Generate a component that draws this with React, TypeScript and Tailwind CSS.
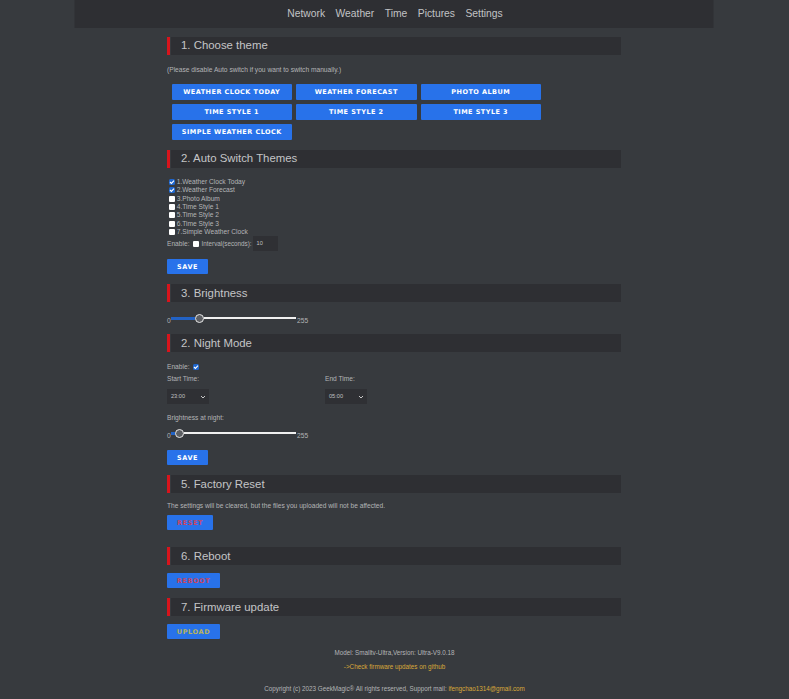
import React from 'react';

const navItems = ['Network', 'Weather', 'Time', 'Pictures', 'Settings'];
const themes = [
  'WEATHER CLOCK TODAY',
  'WEATHER FORECAST',
  'PHOTO ALBUM',
  'TIME STYLE 1',
  'TIME STYLE 2',
  'TIME STYLE 3',
  'SIMPLE WEATHER CLOCK',
];
const autoThemes = [
  { label: '1.Weather Clock Today', checked: true },
  { label: '2.Weather Forecast', checked: true },
  { label: '3.Photo Album', checked: false },
  { label: '4.Time Style 1', checked: false },
  { label: '5.Time Style 2', checked: false },
  { label: '6.Time Style 3', checked: false },
  { label: '7.Simple Weather Clock', checked: false },
];

const Heading = ({ title, className }: { title: string; className: string }) => (
  <div className={`flex h-[18px] gap-[1.5px] ${className}`}>
    <div className="w-[2.5px] bg-[#d8141c]" />
    <div className="flex flex-1 items-center bg-[#2e2f33] pl-[10px] text-[11.4px] text-[#c4c5c7]">{title}</div>
  </div>
);

const Check = ({ checked }: { checked: boolean }) =>
  checked ? (
    <span className="flex h-[6px] w-[6px] shrink-0 items-center justify-center rounded-[1.5px] bg-[#1f66cc]">
      <svg width="6" height="6" viewBox="0 0 6 6" fill="none" stroke="#ffffff" strokeWidth="1.1">
        <path d="M1 3l1.4 1.4L5 1.7" />
      </svg>
    </span>
  ) : (
    <span className="h-[6px] w-[6px] shrink-0 rounded-[1px] bg-white" />
  );

const ActionButton = ({ label, color, width }: { label: string; color: string; width: string }) => (
  <button className={`flex h-[15px] items-center justify-center rounded-[1px] bg-[#2872ea] pt-[2px] font-['DejaVu_Sans',sans-serif] text-[6.5px] font-bold tracking-[0.6px] ${width} ${color}`}>
    {label}
  </button>
);

const Slider = ({ fill, className }: { fill: string; className: string }) => (
  <div className={`flex h-[10px] items-center text-[6.65px] text-[#b4b5b7] ${className}`}>
    <span className="w-[4px] translate-y-[3px]">0</span>
    <div className="flex w-[125px] items-center">
      <div className={`h-[3px] bg-[#2262c4] ${fill}`} />
      <div className="h-[9px] w-[9px] shrink-0 rounded-full border border-[#e8e8e8] bg-[#5c5e62]" />
      <div className="h-[2px] flex-1 bg-[#f0f0f0]" />
    </div>
    <span className="ml-[1px] translate-y-[3px]">255</span>
  </div>
);

const TimeSelect = ({ value }: { value: string }) => (
  <div className="flex h-[15px] w-[42px] items-center justify-between bg-[#2f3034] pl-[4px] pr-[3px] text-[5.6px] text-[#c0c1c3]">
    {value}
    <svg width="6" height="6" viewBox="0 0 6 6" fill="none" stroke="#c8c8c8" strokeWidth="1">
      <path d="M1 2l2 2 2-2" />
    </svg>
  </div>
);

export default function App() {
  return (
    <div className="min-h-[699px] bg-[#373a3e] font-['Liberation_Sans',Arial,sans-serif]">
      <nav className="mx-auto flex h-[28px] w-[639px] -translate-x-[0.5px] items-center justify-center gap-[10.5px] bg-[#2e2f33] pl-[2px] text-[10.3px] text-[#c2c3c5]">
        {navItems.map((item) => (
          <span key={item}>{item}</span>
        ))}
      </nav>

      <main className="ml-[167px] w-[454px]">
        <Heading title="1. Choose theme" className="mt-[9px]" />
        <p className="mt-[10px] h-[9px] text-[6.65px] leading-[9px] text-[#b4b5b7]">
          (Please disable Auto switch if you want to switch manually.)
        </p>
        <div className="ml-[4.5px] mt-[10px] grid w-[370px] grid-cols-[120.5px_120.5px_120.5px] gap-x-[4px] gap-y-[4.5px]">
          {themes.map((theme) => (
            <button
              key={theme}
              className="flex h-[15.5px] items-center justify-center rounded-[1px] bg-[#2872ea] pt-[2px] font-['DejaVu_Sans',sans-serif] text-[6.5px] font-bold tracking-[0.45px] text-white"
            >
              {theme}
            </button>
          ))}
        </div>

        <Heading title="2. Auto Switch Themes" className="mt-[10px]" />
        <div className="ml-[2px] mt-[10.5px] flex flex-col text-[6.65px] text-[#b4b5b7]">
          {autoThemes.map((theme) => (
            <label key={theme.label} className="flex h-[8.3px] items-center gap-[1.7px]">
              <Check checked={theme.checked} />
              {theme.label}
            </label>
          ))}
        </div>
        <div className="flex h-[15px] items-center text-[6.65px] text-[#b4b5b7]">
          <span>Enable:</span>
          <span className="ml-[3px] flex">
            <Check checked={false} />
          </span>
          <span className="ml-[3px] text-[6.3px]">Interval(seconds):</span>
          <span className="ml-[1px] flex h-[15px] w-[25px] items-center bg-[#2f3034] pl-[4px] text-[5.6px] text-[#c0c1c3]">10</span>
        </div>
        <div className="mt-[8px]">
          <ActionButton label="SAVE" color="text-white" width="w-[41px]" />
        </div>

        <Heading title="3. Brightness" className="mt-[10px]" />
        <Slider fill="w-[24px]" className="mt-[11px]" />

        <Heading title="2. Night Mode" className="mt-[11px]" />
        <div className="mt-[10px] flex h-[9px] items-center gap-[3px] text-[6.65px] text-[#b4b5b7]">
          Enable:
          <Check checked />
        </div>
        <div className="mt-[3px] flex gap-[116px] text-[6.65px] text-[#b4b5b7]">
          <div className="w-[42px]">
            <p className="h-[9px] leading-[9px]">Start Time:</p>
            <div className="mt-[6px]">
              <TimeSelect value="23:00" />
            </div>
          </div>
          <div className="w-[42px]">
            <p className="h-[9px] leading-[9px]">End Time:</p>
            <div className="mt-[6px]">
              <TimeSelect value="05:00" />
            </div>
          </div>
        </div>
        <p className="mt-[9px] h-[9px] text-[6.65px] leading-[9px] text-[#b4b5b7]">Brightness at night:</p>
        <Slider fill="w-[4px]" className="mt-[6px]" />
        <div className="mt-[12px]">
          <ActionButton label="SAVE" color="text-white" width="w-[41px]" />
        </div>

        <Heading title="5. Factory Reset" className="mt-[10px]" />
        <p className="mt-[7.5px] h-[9px] text-[6.65px] leading-[9px] text-[#b4b5b7]">
          The settings will be cleared, but the files you uploaded will not be affected.
        </p>
        <div className="mt-[5.5px]">
          <ActionButton label="RESET" color="text-[#c94560]" width="w-[46px]" />
        </div>

        <Heading title="6. Reboot" className="mt-[17px]" />
        <div className="mt-[8px]">
          <ActionButton label="REBOOT" color="text-[#c94560]" width="w-[53px]" />
        </div>

        <Heading title="7. Firmware update" className="mt-[10px]" />
        <div className="mt-[8px]">
          <ActionButton label="UPLOAD" color="text-[#b8b45a]" width="w-[53px]" />
        </div>
      </main>

      <footer className="flex flex-col items-center text-[6.3px] text-[#b4b5b7]">
        <p className="mt-[9px] h-[9px] leading-[9px]">Model: Smalltv-Ultra,Version: Ultra-V9.0.18</p>
        <p className="mt-[5px] h-[9px] leading-[9px] text-[#d9a93a]">-&gt;Check firmware updates on github</p>
        <p className="mt-[13px] h-[9px] leading-[9px]">
          Copyright (c) 2023 GeekMagic® All rights reserved, Support mail: <span className="text-[#d9a93a]">ifengchao1314@gmail.com</span>
        </p>
      </footer>
    </div>
  );
}
